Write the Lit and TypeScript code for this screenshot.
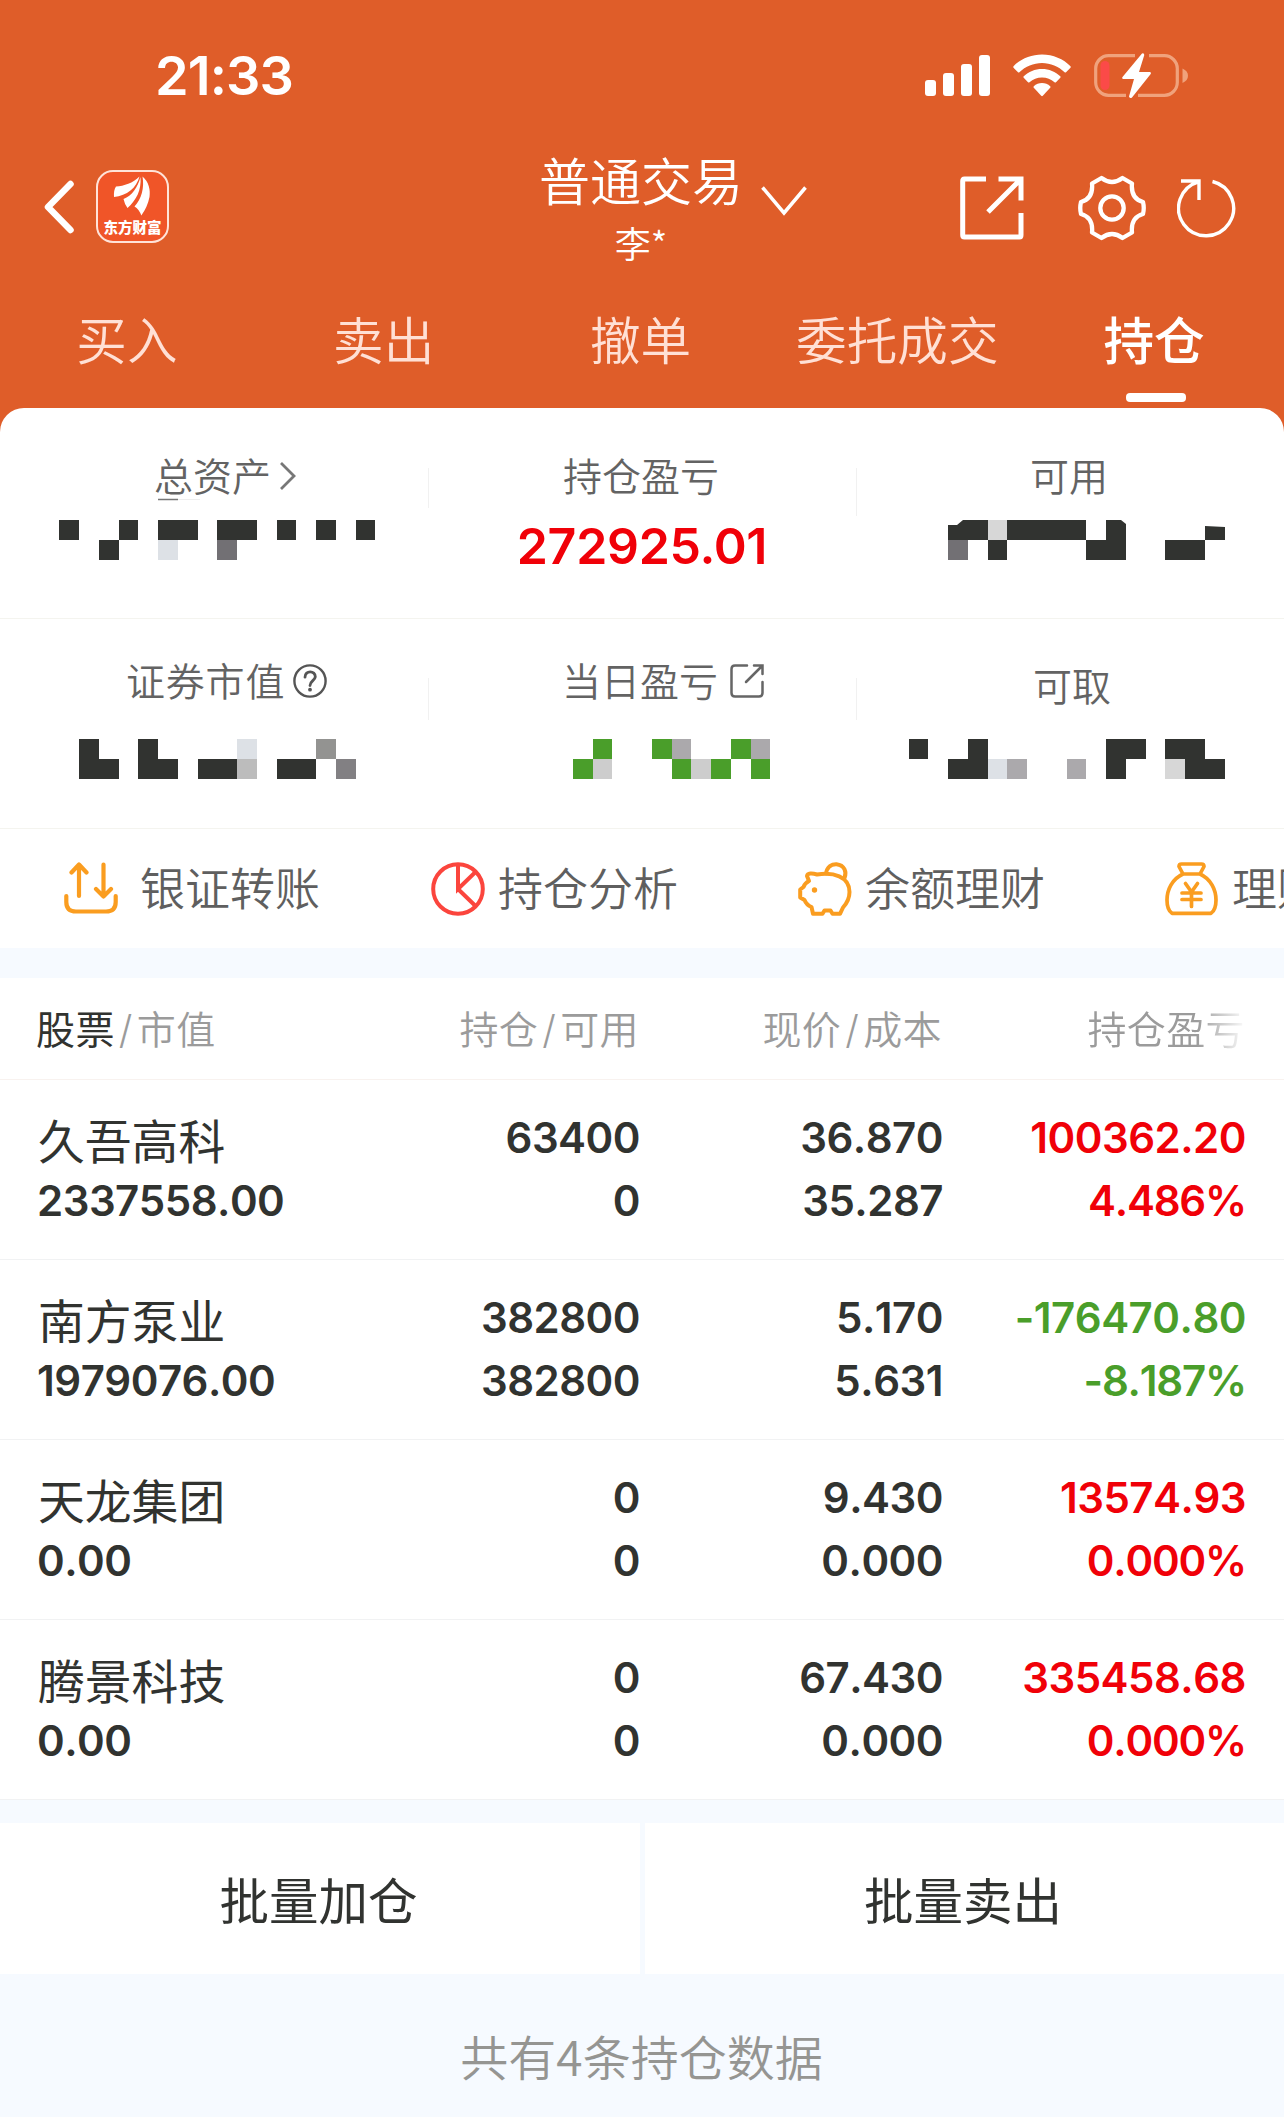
import { LitElement, html, css, svg } from "lit";
import { customElement } from "lit/decorators.js";

type Block = [from: number, to: number, row: number, color: string];
interface Holding {
  name: string;
  value: string;
  held: string;
  usable: string;
  price: string;
  cost: string;
  profit: string;
  ratio: string;
  trend: "up" | "down";
}

const CELL = 19.75;
const INK = "#313330";
const PALE = "#dde1e6";
const SLATE = "#727074";
const MIST = "#d7d7d7";
const ASH = "#aba9ac";
const GREEN = "#4a9e2a";

const TOTAL: Block[] = [
  [3, 4, 0, INK], [6, 7, 0, INK], [8, 10, 0, INK], [11, 13, 0, INK], [14, 15, 0, INK],
  [16, 17, 0, INK], [18, 19, 0, INK], [5, 6, 1, INK], [8, 9, 1, PALE], [11, 12, 1, SLATE],
];
const USABLE: Block[] = [
  [50, 51, 0, MIST], [51, 55, 0, INK],
  [48, 49, 1, SLATE], [50, 51, 1, INK], [55, 57, 1, INK], [59, 61, 1, INK],
];
const MARKET: Block[] = [
  [4, 5, 0, INK], [7, 8, 0, INK], [12, 13, 0, PALE], [16, 17, 0, "#939391"],
  [4, 6, 1, INK], [7, 9, 1, INK], [10, 12, 1, INK], [12, 13, 1, "#bcbcbc"], [14, 16, 1, INK], [17, 18, 1, "#828083"],
];
const TODAY: Block[] = [
  [30, 31, 0, GREEN], [33, 34, 0, GREEN], [34, 35, 0, ASH], [37, 38, 0, GREEN], [38, 39, 0, ASH],
  [29, 30, 1, GREEN], [30, 31, 1, "#cdcdcd"], [34, 35, 1, GREEN], [35, 36, 1, "#cdcdcd"], [36, 37, 1, GREEN], [38, 39, 1, GREEN],
];
const DRAWABLE: Block[] = [
  [46, 47, 0, INK], [49, 50, 0, INK], [56, 58, 0, INK], [59, 61, 0, INK],
  [48, 50, 1, INK], [50, 51, 1, PALE], [51, 52, 1, ASH], [54, 55, 1, ASH], [56, 57, 1, INK], [59, 60, 1, MIST], [60, 62, 1, INK],
];

const HOLDINGS: Holding[] = [
  { name: "久吾高科", value: "2337558.00", held: "63400", usable: "0", price: "36.870", cost: "35.287", profit: "100362.20", ratio: "4.486%", trend: "up" },
  { name: "南方泵业", value: "1979076.00", held: "382800", usable: "382800", price: "5.170", cost: "5.631", profit: "-176470.80", ratio: "-8.187%", trend: "down" },
  { name: "天龙集团", value: "0.00", held: "0", usable: "0", price: "9.430", cost: "0.000", profit: "13574.93", ratio: "0.000%", trend: "up" },
  { name: "腾景科技", value: "0.00", held: "0", usable: "0", price: "67.430", cost: "0.000", profit: "335458.68", ratio: "0.000%", trend: "up" },
];

/* Masked amount: two rows of blocks on the page-wide cell grid. */
const mosaic = (column: number, blocks: Block[], extra: unknown = "") => html`
  <svg class="mosaic" width="428" height="40" viewBox="${column * 428} 0 428 40">
    ${blocks.map(([a, b, row, color]) => {
      const x = Math.round(a * CELL);
      return svg`<rect x=${x} y=${row * 20} width=${Math.round(b * CELL) - x} height="20" fill=${color}></rect>`;
    })}
    ${extra}
  </svg>`;

@customElement("app-root")
export class AppRoot extends LitElement {
  static styles = css`
    :host {
      display: block;
      width: 1284px;
      height: 2117px;
      overflow: hidden;
      background: #f6faff;
      color: #313330;
      font-family: "Noto Sans CJK SC", sans-serif;
      font-weight: 350;
    }
    svg { display: block; flex: none; }
    .top { background: #df5d29; color: #fff; height: 432px; }
    .status {
      height: 147px; box-sizing: border-box; padding: 5px 96px 0 155px;
      display: flex; align-items: center; justify-content: space-between;
    }
    .time { font: 600 54px/60px Inter, sans-serif; letter-spacing: -0.9px; }
    .signals { display: flex; align-items: center; gap: 23px; }
    .nav { height: 118px; display: flex; align-items: center; padding: 0 48px 0 44px; }
    .back { margin-top: 1px; }
    .logo {
      width: 73px; height: 73px; box-sizing: border-box; margin-left: 22px;
      border: 2px solid #ffe3d8; border-radius: 17px; background: #f05528;
      display: flex; flex-direction: column; align-items: center;
    }
    .logo-name { font-size: 14.5px; line-height: 16px; font-weight: 900; white-space: nowrap; margin-top: 1px; }
    .heading { margin-left: 370px; width: 204px; text-align: center; white-space: nowrap; }
    .title { font-size: 51px; line-height: 64px; }
    .user { font-size: 36px; line-height: 46px; margin-top: 8px; }
    .drop { margin-left: 18px; margin-top: -11px; }
    .tools { margin-left: auto; margin-top: 3px; display: flex; align-items: center; }
    .gear { margin-left: 54px; }
    .reload { margin-left: 31px; }
    .tabs { display: grid; grid-template-columns: repeat(5, 1fr); height: 143px; width: 1284px; margin-left: -1.5px; }
    .tab {
      display: flex; flex-direction: column; align-items: center; padding-top: 41px;
      font-size: 50.6px; line-height: 64px; color: #ffe0d5; white-space: nowrap;
    }
    .tab.on { color: #fff; font-weight: 500; }
    .mark { width: 60px; height: 9px; border-radius: 4px; background: #fff; margin: 23px 0 0 3px; }
    .panel { margin-top: -24px; background: #fff; border-radius: 24px 24px 0 0; height: 540px; overflow: hidden; }
    .sums { display: grid; grid-template-columns: 428px 428px 428px; height: 210px; border-bottom: 1px solid #f4f4ef; }
    .sums.second { height: 209px; }
    .sum { display: flex; flex-direction: column; padding-top: 38px; position: relative; }
    .second .sum { padding-top: 32px; }
    .sum + .sum::before {
      content: ""; position: absolute; left: 0; top: 60px; width: 1px; height: 40px; background: #f1f1f1;
    }
    .sum + .sum + .sum::before { height: 48px; }
    .second .sum + .sum::before { top: 59px; height: 42px; }
    .label {
      display: flex; align-items: center; font-size: 39px; line-height: 56px; height: 56px;
      color: #636363; white-space: nowrap; padding-left: 135px;
    }
    .label svg { margin-top: 4px; }
    .label.total { padding-left: 154px; gap: 6px; }
    .label.market { padding-left: 126px; gap: 8px; letter-spacing: 0.8px; }
    .label.today { padding-left: 134px; gap: 12px; }
    .label.usable { padding-left: 174px; }
    .label.draw { padding-left: 177px; padding-top: 4px; box-sizing: border-box; height: 62px; margin-bottom: -6px; }
    .mosaic { margin-top: 18px; overflow: visible; }
    .second .mosaic { margin-top: 32px; }
    .big { font: 600 50px/50px Inter, sans-serif; color: #f00008; margin-top: 19px; text-align: center; letter-spacing: -0.3px; }
    .links { display: flex; height: 119px; align-items: center; padding-left: 64px; }
    .link { width: 367px; flex: none; display: flex; align-items: center; gap: 13px; color: #5f5f5f; white-space: nowrap; }
    .link.first { gap: 22px; }
    .link span { font-size: 45px; line-height: 60px; padding-bottom: 3px; }
    .list { margin-top: 30px; background: #fff; }
    .row {
      display: grid; grid-template-columns: 337px 266px 303px 303px; padding: 0 38px 0 37px; width: 1284px;
      box-sizing: border-box; border-bottom: 1px solid #f1f2f3;
    }
    .head {
      height: 102px; box-sizing: border-box; border-bottom-color: #f8f2ef; font-size: 39px; line-height: 56px;
      color: #9b9b9b; padding-top: 21px; padding-left: 36px; letter-spacing: 0.4px;
    }
    .head i { font-style: normal; margin: 0 4px; font-family: Inter, sans-serif; font-weight: 300; }
    .dark { color: #313330; font-weight: 400; }
    .right { text-align: right; white-space: nowrap; }
    .fade { -webkit-mask-image: linear-gradient(to right, #000 255px, transparent 305px); mask-image: linear-gradient(to right, #000 255px, transparent 305px); }
    .stock { height: 180px; padding-top: 33px; font: 600 42px/50px Inter, sans-serif; font-kerning: none; letter-spacing: -0.5px; }
    .line2 { margin-top: 13px; }
    .ratio { letter-spacing: -1.2px; }
    .name { font: 400 46.8px/52px "Noto Sans CJK SC", sans-serif; letter-spacing: 0; padding-left: 1px; }
    .name + .line2 { margin-top: 11px; }
    .up { color: #f00008; }
    .down { color: #4a9e2a; }
    .actions { margin-top: 23px; display: grid; grid-template-columns: 640px 639px; gap: 5px; height: 151px; }
    .action { background: #fff; font-size: 49.5px; line-height: 151px; text-align: center; font-weight: 400; box-sizing: border-box; padding-right: 3px; }
    .foot { font-size: 48px; line-height: 64px; text-align: center; color: #959592; margin-top: 49px; padding-right: 1px; }
  `;

  private statusBar() {
    return html`
      <div class="status">
        <div class="time">21:33</div>
        <div class="signals">
          <svg width="65" height="44" viewBox="925 54 65 44" fill="#fff">
            <rect x="925" y="80" width="11" height="16" rx="3"></rect>
            <rect x="943" y="73" width="11" height="23" rx="3"></rect>
            <rect x="961" y="64" width="11" height="32" rx="3"></rect>
            <rect x="979" y="55" width="11" height="41" rx="3"></rect>
          </svg>
          <svg width="58" height="44" viewBox="0 0 58 44" fill="#fff">
            <path d="M29 .5C40 .5 50.500 5 57.500 12.200Q58 13 57.500 13.700L53 18.200Q52.300 18.700 51.600 18.200C45.500 12.500 37.500 9 29 9S12.500 12.500 6.400 18.200Q5.700 18.700 5 18.200L.5 13.700Q0 13 .5 12.200C7.500 5 18 .5 29 .5Z"></path>
            <path d="M29 15C36 15 42.500 17.700 47.300 22.300Q48 23 47.300 23.700L43 28.200Q42.300 28.800 41.500 28.200C38 25.200 33.800 23.500 29 23.500S20 25.200 16.500 28.200Q15.700 28.800 15 28.200L10.700 23.700Q10 23 10.700 22.300C15.500 17.700 22 15 29 15Z"></path>
            <path d="M29 29C32 29 35 30.200 37.200 32.200Q37.900 33 37.200 33.800L29.800 41.800Q29 42.600 28.200 41.800L20.800 33.800Q20.100 33 20.800 32.200C23 30.200 26 29 29 29Z"></path>
          </svg>
          <svg width="94" height="46" viewBox="1093 53 94 46">
            <path d="M1134 55.700H1107.500A13 13 0 0 0 1094.700 68.500V82.500A13 13 0 0 0 1107.500 95.300H1125M1137 95.300H1163.500A13 13 0 0 0 1176.300 82.500V68.500A13 13 0 0 0 1163.500 55.700H1148" fill="none" stroke="#f0a27c" stroke-width="3.2"></path>
            <path d="M1181.500 68.500Q1187 71 1187 75.700T1181.500 83Z" fill="#f0a27c"></path>
            <rect x="1099.500" y="61" width="9" height="29" rx="4.500" fill="#fb4a48"></rect>
            <path d="M1141 53.500L1121.500 77Q1120.500 79 1122.500 79H1133L1128 96.500Q1129 99 1131 97.500L1149.700 74Q1150.500 72 1148.500 72H1138L1143.300 55Q1143 52.500 1141 53.500Z" fill="#fff"></path>
          </svg>
        </div>
      </div>`;
  }

  private navBar() {
    return html`
      <div class="nav">
        <svg class="back" width="30" height="54" viewBox="0 0 30 54" fill="none" stroke="#fff" stroke-width="6.500" stroke-linecap="round" stroke-linejoin="round">
          <path d="M26.500 4L4 27L26.500 50"></path>
        </svg>
        <div class="logo">
          <svg width="68" height="46" viewBox="2 2 68 46" fill="#fff">
            <path d="M42.500 6.500C36 13 27 16 19 16.500Q16.500 20 17 27C30 25.500 39.500 18 42.500 6.500Z"></path>
            <path d="M43.500 7C40.500 18 35 25.500 26.500 29Q27.500 34 30.500 38C39.500 30 44.500 20 43.500 7Z"></path>
            <path d="M45.500 6.500C52 12 53.500 20 52.500 27Q50.500 37 44.300 45.500Q42 39 37.500 36.500C44.500 29 47.500 18 45.500 6.500Z"></path>
          </svg>
          <div class="logo-name">东方财富</div>
        </div>
        <div class="heading">
          <div class="title">普通交易</div>
          <div class="user">李*</div>
        </div>
        <svg class="drop" width="46" height="30" viewBox="0 0 46 30" fill="none" stroke="#fff" stroke-width="3.500">
          <path d="M1.500 1.500L23 27L44.500 1.500"></path>
        </svg>
        <div class="tools">
          <svg width="64" height="64" viewBox="0 0 64 64" fill="none" stroke="#fff" stroke-width="5">
            <path d="M26 3H4.500Q2.700 3 2.700 5V59Q2.700 61 4.500 61H59.500Q61 61 61 59V37M38.500 3H61V24.500M28 36L60 4"></path>
          </svg>
          <svg class="gear" width="68" height="66" viewBox="-34 -33 68 66" fill="none" stroke="#fff" stroke-width="4.300" stroke-linejoin="round">
            <circle r="11.700"></circle>
            <path d="M-10.500 -30Q0 -22 10.500 -30L20 -24.500C19 -14.500 22 -8.500 31 -6Q32.500 0 31 6C22 8.500 19 14.500 20 24.500L10.500 30Q0 22 -10.500 30L-20 24.500C-19 14.500 -22 8.500 -31 6Q-32.500 0 -31 -6C-22 -8.500 -19 -14.500 -20 -24.500Z"></path>
          </svg>
          <svg class="reload" width="59" height="60" viewBox="0 0 59 60" fill="none" stroke="#fff" stroke-width="3.400">
            <path d="M35.500 3.500A27.500 27.500 0 1 1 21.500 3.800M4 3H22V22"></path>
          </svg>
        </div>
      </div>`;
  }

  private sums() {
    return html`
      <div class="sums">
        <div class="sum">
          <div class="label total">
            <span>总资产</span>
            <svg width="20" height="30" viewBox="0 0 20 30" fill="none" stroke="#777" stroke-width="2.800"><path d="M4 2L17 15L4 28"></path></svg>
          </div>
          ${mosaic(0, TOTAL, svg`
            <path d="M158 -20.500H178" stroke="#777" stroke-width="1.500"></path>
            <path d="M178 -20.500H200" stroke="#eee" stroke-width="1"></path>`)}
        </div>
        <div class="sum">
          <div class="label">持仓盈亏</div>
          <div class="big">272925.01</div>
        </div>
        <div class="sum">
          <div class="label usable">可用</div>
          ${mosaic(2, USABLE, svg`
            <path d="M948 5H957L963 0H988V20H948Z" fill=${INK}></path>
            <path d="M1106 0H1121L1126 4V20H1106Z" fill=${INK}></path>
            <path d="M1205 6L1225 7V20H1205Z" fill=${INK}></path>`)}
        </div>
      </div>
      <div class="sums second">
        <div class="sum">
          <div class="label market">
            <span>证券市值</span>
            <svg width="34" height="34" viewBox="0 0 34 34" fill="none" stroke="#555" stroke-width="2.400">
              <circle cx="17" cy="17" r="15.600"></circle>
              <path d="M12 13.200C12 5.800 22.500 6.400 22.300 12.800C22 16.500 17 17 17 21.500" stroke-width="2.800" stroke-linecap="round"></path>
              <circle cx="17" cy="25.700" r="1.900" fill="#555" stroke="none"></circle>
            </svg>
          </div>
          ${mosaic(0, MARKET)}
        </div>
        <div class="sum">
          <div class="label today">
            <span>当日盈亏</span>
            <svg width="34" height="34" viewBox="0 0 34 34" fill="none" stroke="#666" stroke-width="2.500" stroke-linecap="round">
              <path d="M17 1.500H5Q1.500 1.500 1.500 5V29Q1.500 32.500 5 32.500H29Q32.500 32.500 32.500 29V18M24 1.500H32.500V10M16 18L32 2"></path>
            </svg>
          </div>
          ${mosaic(1, TODAY)}
        </div>
        <div class="sum">
          <div class="label draw">可取</div>
          ${mosaic(2, DRAWABLE)}
        </div>
      </div>`;
  }

  private links() {
    return html`
      <div class="links">
        <div class="link first">
          <svg width="54" height="54" viewBox="0 0 54 54" fill="none" stroke="#fa9d20" stroke-width="4.200" stroke-linecap="round" stroke-linejoin="round">
            <path d="M15 34V2.500M7.500 10.500L15 2.500L22.500 10.500M39.500 2.500V34.500M32 27L39.500 34.500L47 27M2.300 34V40Q2.300 49.500 12 49.500H42Q51.700 49.500 51.700 40V34"></path>
          </svg>
          <span>银证转账</span>
        </div>
        <div class="link">
          <svg width="54" height="54" viewBox="0 0 54 54" fill="none" stroke="#fb453d" stroke-width="4">
            <circle cx="27" cy="27" r="24.800"></circle>
            <path d="M27 2V27L44.500 10M27 27L44.500 44"></path>
          </svg>
          <span>持仓分析</span>
        </div>
        <div class="link">
          <svg width="54" height="54" viewBox="0 0 54 54" fill="none" stroke="#fa9d20" stroke-width="4" stroke-linejoin="round" stroke-linecap="round">
            <path d="M19 12.500C14 11 9.500 11 9 14L11 19Q7 21 5.500 25L2.200 27.500V35.500L6.500 38Q8.500 43 13.500 45L15 51.800H24.500L26.500 48.500H32.500L34.500 51.800H42L45 45.500C50 40 51.500 35 51.500 30C51.500 14 35 10 19 12.500Z"></path>
            <path d="M28 11.500C29 4.500 34 2 38.500 2.200C46.500 3 49 10 46.500 16"></path>
            <circle cx="16.500" cy="28" r="2.700" fill="#fa9d20" stroke="none"></circle>
          </svg>
          <span>余额理财</span>
        </div>
        <div class="link">
          <svg width="54" height="54" viewBox="0 0 54 54" fill="none" stroke="#fa9d20" stroke-width="3.700" stroke-linejoin="round" stroke-linecap="round">
            <path d="M18 12L14 4.500Q14 2 16.500 2H36.500Q39 2 39 4.500L35 12M18 12H35C46 17 51 28 51 38Q51 48 46 51.300H7Q2 48 2 38C2 28 7 17 18 12"></path>
            <path d="M20.500 21.500L26.500 30L32.500 21.500M17 31H36M17 37.500H36M26.500 30V44.500"></path>
          </svg>
          <span>理财</span>
        </div>
      </div>`;
  }

  private stock(h: Holding) {
    return html`
      <div class="row stock">
        <div><div class="name">${h.name}</div><div class="line2">${h.value}</div></div>
        <div class="right"><div>${h.held}</div><div class="line2">${h.usable}</div></div>
        <div class="right"><div>${h.price}</div><div class="line2">${h.cost}</div></div>
        <div class="right ${h.trend}"><div>${h.profit}</div><div class="line2 ratio">${h.ratio}</div></div>
      </div>`;
  }

  render() {
    return html`
      <div class="top">
        ${this.statusBar()} ${this.navBar()}
        <div class="tabs">
          <div class="tab">买入</div>
          <div class="tab">卖出</div>
          <div class="tab">撤单</div>
          <div class="tab">委托成交</div>
          <div class="tab on">持仓<div class="mark"></div></div>
        </div>
      </div>
      <div class="panel">${this.sums()} ${this.links()}</div>
      <div class="list">
        <div class="row head">
          <div><span class="dark">股票</span><i>/</i>市值</div>
          <div class="right">持仓<i>/</i>可用</div>
          <div class="right">现价<i>/</i>成本</div>
          <div class="right fade">持仓盈亏</div>
        </div>
        ${HOLDINGS.map((h) => this.stock(h))}
      </div>
      <div class="actions">
        <div class="action">批量加仓</div>
        <div class="action">批量卖出</div>
      </div>
      <div class="foot">共有4条持仓数据</div>`;
  }
}
